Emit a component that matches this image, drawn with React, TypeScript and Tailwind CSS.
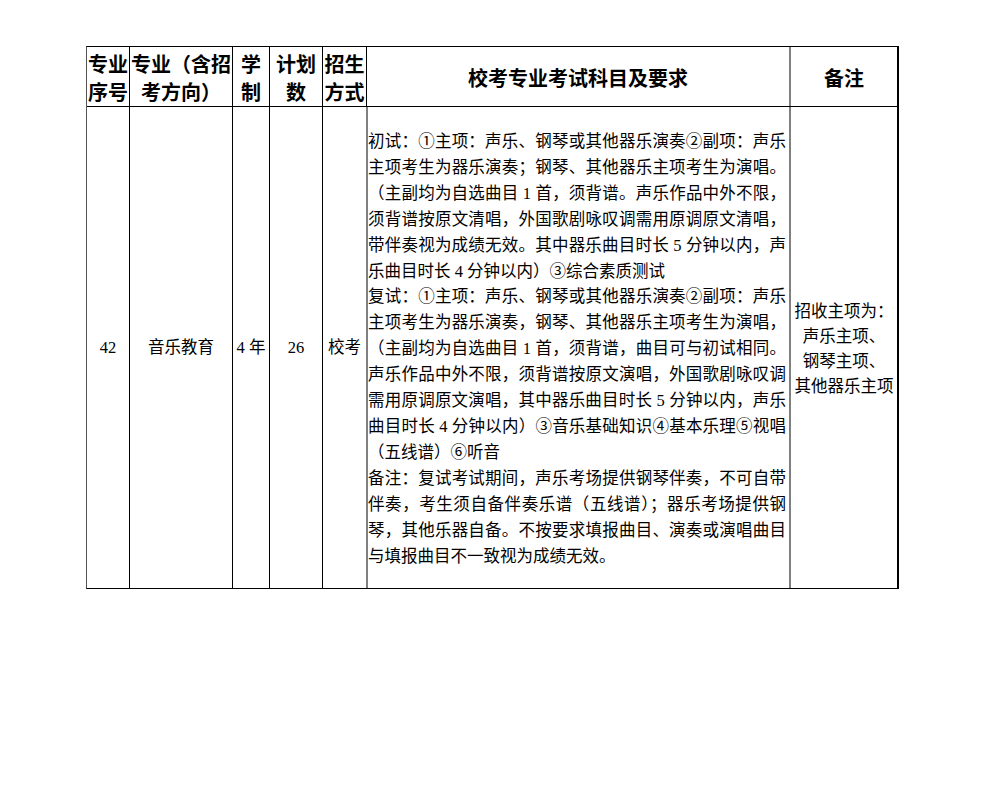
const serif = "font-['Liberation_Serif','Noto_Sans_CJK_SC',serif]";

const headCells = [
  { w: "w-[42px]", lines: ["专业", "序号"], border: "" },
  { w: "w-[103px]", lines: ["专业（含招", "考方向）"], border: "border-l border-black" },
  { w: "w-[37px]", lines: ["学", "制"], border: "border-l border-black" },
  { w: "w-[53px]", lines: ["计划", "数"], border: "border-l border-black" },
  { w: "w-[44px]", lines: ["招生", "方式"], border: "border-l border-black" },
];

// 每行手工断开，保持与原表格一致的换行
const detail: { t: string; full?: boolean }[] = [
  { t: "初试：①主项：声乐、钢琴或其他器乐演奏②副项：声乐", full: true },
  { t: "主项考生为器乐演奏；钢琴、其他器乐主项考生为演唱。", full: true },
  { t: "（主副均为自选曲目 1 首，须背谱。声乐作品中外不限，", full: true },
  { t: "须背谱按原文清唱，外国歌剧咏叹调需用原调原文清唱，", full: true },
  { t: "带伴奏视为成绩无效。其中器乐曲目时长 5 分钟以内，声", full: true },
  { t: "乐曲目时长 4 分钟以内）③综合素质测试" },
  { t: "复试：①主项：声乐、钢琴或其他器乐演奏②副项：声乐", full: true },
  { t: "主项考生为器乐演奏，钢琴、其他器乐主项考生为演唱，", full: true },
  { t: "（主副均为自选曲目 1 首，须背谱，曲目可与初试相同。", full: true },
  { t: "声乐作品中外不限，须背谱按原文演唱，外国歌剧咏叹调", full: true },
  { t: "需用原调原文演唱，其中器乐曲目时长 5 分钟以内，声乐", full: true },
  { t: "曲目时长 4 分钟以内）③音乐基础知识④基本乐理⑤视唱", full: true },
  { t: "（五线谱）⑥听音" },
  { t: "备注：复试考试期间，声乐考场提供钢琴伴奏，不可自带", full: true },
  { t: "伴奏，考生须自备伴奏乐谱（五线谱）；器乐考场提供钢", full: true },
  { t: "琴，其他乐器自备。不按要求填报曲目、演奏或演唱曲目", full: true },
  { t: "与填报曲目不一致视为成绩无效。" },
];

const remark = ["招收主项为：", "声乐主项、", "钢琴主项、", "其他器乐主项"];

export default function App() {
  return (
    <div className={`min-h-screen bg-white pl-[86px] pt-[46px] text-black ${serif}`}>
      <div className="w-[813px] border-t border-b border-l border-r-2 border-t-black border-b-black border-l-[#555] border-r-black">
        {/* 表头 */}
        <div className="flex h-[60px] border-b border-black text-[20px] font-bold">
          {headCells.map((c) => (
            <div
              key={c.lines.join("")}
              className={`${c.w} ${c.border} flex shrink-0 flex-col items-center justify-center pt-[5px] leading-[28px] whitespace-nowrap`}
            >
              {c.lines.map((l) => (
                <div key={l}>{l}</div>
              ))}
            </div>
          ))}
          <div className="flex w-[423px] shrink-0 items-center justify-center border-l border-black pt-[5px]">
            校考专业考试科目及要求
          </div>
          <div className="flex w-[108px] shrink-0 items-center justify-center border-l-2 border-[#808080] pt-[5px]">
            备注
          </div>
        </div>

        {/* 内容 */}
        <div className="flex h-[481px] text-[16.5px]">
          <div className="flex w-[42px] shrink-0 items-center justify-center pt-[2px]">42</div>
          <div className="flex w-[103px] shrink-0 items-center justify-center border-l border-black pt-[2px]">
            音乐教育
          </div>
          <div className="flex w-[37px] shrink-0 items-center justify-center border-l border-black pt-[2px] whitespace-pre">
            4 年
          </div>
          <div className="flex w-[53px] shrink-0 items-center justify-center border-l border-black pt-[2px]">
            26
          </div>
          <div className="flex w-[44px] shrink-0 items-center justify-center border-l border-black pt-[2px]">
            校考
          </div>
          <div className="w-[423px] shrink-0 border-l-2 border-[#808080] pt-[22px] pr-[3px] leading-[25.9px]">
            {detail.map((d, i) => (
              <div
                key={i}
                className={`whitespace-nowrap ${d.full ? "text-justify [text-align-last:justify]" : ""}`}
              >
                {d.t}
              </div>
            ))}
          </div>
          <div className="flex w-[108px] shrink-0 flex-col items-center justify-center border-l-2 border-[#808080] pt-[2px] leading-[25px]">
            {remark.map((r) => (
              <div key={r} className="whitespace-nowrap">
                {r}
              </div>
            ))}
          </div>
        </div>
      </div>
    </div>
  );
}
